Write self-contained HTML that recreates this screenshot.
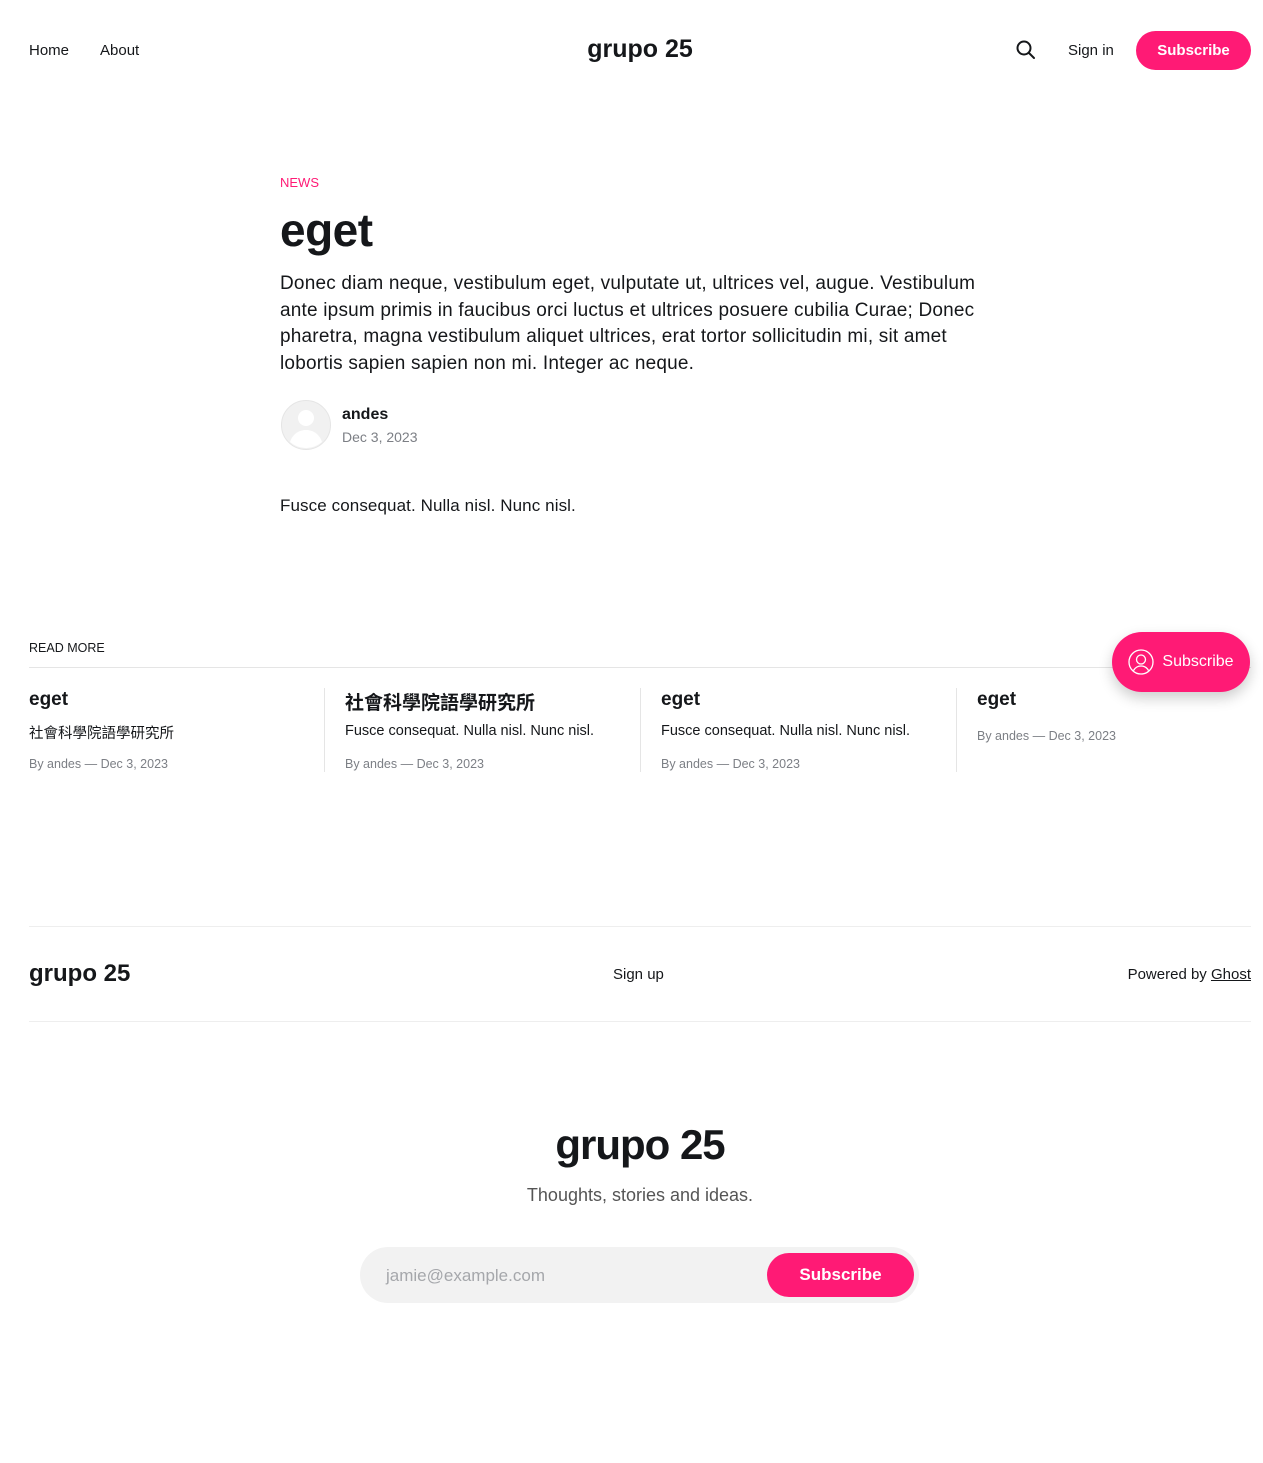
<!DOCTYPE html>
<html><head><meta charset="utf-8"><style>
*{box-sizing:border-box;margin:0;padding:0}
body{width:1263px;height:1463px;background:#fff;font-family:"Liberation Sans","Noto Sans CJK TC",sans-serif;color:#15171a;position:relative;overflow:hidden}
.abs{position:absolute;white-space:nowrap}
.nav{font-size:15px;font-weight:500}
.btn{background:#ff1a75;color:#fff;font-weight:700;border-radius:999px;display:flex;align-items:center;justify-content:center}
.meta{font-size:12.5px;color:#7c7f85}
.t{font-size:19px;font-weight:700}
.d{font-size:14.5px}
.sep{position:absolute;top:688px;width:1px;height:84px;background:#e5e5e5}
</style></head><body>
<div class="abs nav" style="left:29px;top:42px">Home</div>
<div class="abs nav" style="left:100px;top:42px">About</div>
<div class="abs" style="left:0;width:1280px;text-align:center;top:35px;font-size:25px;font-weight:700">grupo 25</div>
<svg class="abs" style="left:1016px;top:40px" width="20" height="20" viewBox="0 0 20 20" fill="none" stroke="#15171a" stroke-width="2"><circle cx="8" cy="8" r="6.5"/><path d="M13 13l5 5" stroke-linecap="round"/></svg>
<div class="abs nav" style="left:1068px;top:42px">Sign in</div>
<div class="abs btn" style="left:1136px;top:31px;width:115px;height:39px;font-size:15px">Subscribe</div>

<div class="abs" style="left:280px;top:175px;font-size:13px;color:#ff1a75">NEWS</div>
<div class="abs" style="left:280px;top:203px;font-size:46px;font-weight:800;letter-spacing:-0.5px">eget</div>
<div style="position:absolute;left:280px;top:271px;width:720px;font-size:19px;line-height:26.5px;letter-spacing:0.2px">Donec diam neque, vestibulum eget, vulputate ut, ultrices vel, augue. Vestibulum<br>ante ipsum primis in faucibus orci luctus et ultrices posuere cubilia Curae; Donec<br>pharetra, magna vestibulum aliquet ultrices, erat tortor sollicitudin mi, sit amet<br>lobortis sapien sapien non mi. Integer ac neque.</div>
<svg class="abs" style="left:281px;top:400px" width="50" height="50" viewBox="0 0 50 50"><circle cx="25" cy="25" r="24.5" fill="#f1f1f1" stroke="#e5e5e5"/><circle cx="25" cy="18" r="8" fill="#fff"/><path d="M9 42c3-9 10-12 16-12s13 3 16 12a24 24 0 0 1-32 0z" fill="#fff"/></svg>
<div class="abs" style="left:342px;top:406px;font-size:16px;font-weight:600">andes</div>
<div class="abs" style="left:342px;top:429px;font-size:14px;color:#7c7f85">Dec 3, 2023</div>
<div class="abs" style="left:280px;top:496px;font-size:17px;letter-spacing:0.1px">Fusce consequat. Nulla nisl. Nunc nisl.</div>

<div class="abs" style="left:29px;top:641px;font-size:12.5px;font-weight:500">READ MORE</div>
<div class="abs" style="left:29px;top:667px;width:1222px;height:1px;background:#e5e5e5"></div>

<div class="abs t" style="left:29px;top:689px">eget</div>
<div class="abs d" style="left:29px;top:722px">社會科學院語學研究所</div>
<div class="abs meta" style="left:29px;top:757px">By andes — Dec 3, 2023</div>
<div class="sep" style="left:324px"></div>
<div class="abs t" style="left:345px;top:688px">社會科學院語學研究所</div>
<div class="abs d" style="left:345px;top:723px">Fusce consequat. Nulla nisl. Nunc nisl.</div>
<div class="abs meta" style="left:345px;top:757px">By andes — Dec 3, 2023</div>
<div class="sep" style="left:640px"></div>
<div class="abs t" style="left:661px;top:689px">eget</div>
<div class="abs d" style="left:661px;top:723px">Fusce consequat. Nulla nisl. Nunc nisl.</div>
<div class="abs meta" style="left:661px;top:757px">By andes — Dec 3, 2023</div>
<div class="sep" style="left:956px"></div>
<div class="abs t" style="left:977px;top:689px">eget</div>
<div class="abs meta" style="left:977px;top:729px">By andes — Dec 3, 2023</div>

<div class="abs btn" style="left:1112px;top:632px;width:138px;height:60px;font-weight:400;font-size:16px;box-shadow:0 6px 14px rgba(0,0,0,.2);gap:8px"><svg width="26" height="26" viewBox="0 0 26 26" fill="none" stroke="#fff" stroke-width="1.3"><circle cx="13" cy="13" r="12"/><circle cx="13" cy="10.5" r="4.5"/><path d="M5.5 21.5c2-3.5 4.5-4.5 7.5-4.5s5.5 1 7.5 4.5"/></svg>Subscribe</div>

<div class="abs" style="left:29px;top:926px;width:1222px;height:1px;background:#eee"></div>
<div class="abs" style="left:29px;top:960px;font-size:24px;font-weight:700">grupo 25</div>
<div class="abs nav" style="left:613px;top:966px">Sign up</div>
<div class="abs nav" style="right:12px;top:966px">Powered by <u>Ghost</u></div>
<div class="abs" style="left:29px;top:1021px;width:1222px;height:1px;background:#eee"></div>

<div class="abs" style="left:0;width:1280px;text-align:center;top:1121px;font-size:42px;font-weight:800;letter-spacing:-1px">grupo 25</div>
<div class="abs" style="left:0;width:1280px;text-align:center;top:1185px;font-size:18px;color:#555">Thoughts, stories and ideas.</div>
<div class="abs" style="left:360px;top:1247px;width:559px;height:56px;border-radius:999px;background:#f2f2f2"></div>
<div class="abs" style="left:386px;top:1266px;font-size:17px;color:#a5a7ab">jamie@example.com</div>
<div class="abs btn" style="left:767px;top:1253px;width:147px;height:44px;font-size:17px">Subscribe</div>
</body></html>
